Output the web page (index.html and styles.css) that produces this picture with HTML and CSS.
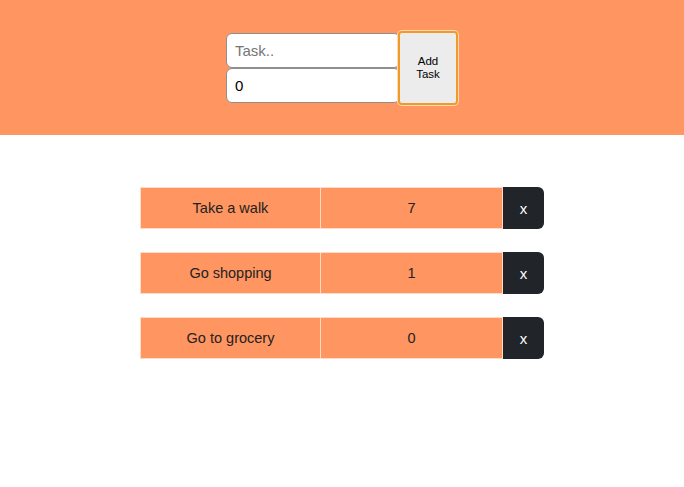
FILE: index.html
```html
<!DOCTYPE html>
<html>
<head>
<meta charset="utf-8">
<link rel="stylesheet" href="styles.css">
</head>
<body>
<header class="top">
  <form class="task-form">
    <div class="fields">
      <input class="field" type="text" placeholder="Task..">
      <input class="field" type="text" value="0">
    </div>
    <button class="add" type="button">Add<br>Task</button>
  </form>
</header>
<main class="list">
  <div class="row"><div class="cell">Take a walk</div><div class="cell">7</div><button class="del">x</button></div>
  <div class="row"><div class="cell">Go shopping</div><div class="cell">1</div><button class="del">x</button></div>
  <div class="row"><div class="cell">Go to grocery</div><div class="cell">0</div><button class="del">x</button></div>
</main>
</body>
</html>
```
FILE: styles.css
```css
html, body { margin: 0; padding: 0; }
body { font-family: "Liberation Sans", Arial, sans-serif; background: #fff; color: #212529; }
.top { background: #ff9560; height: 135px; display: flex; justify-content: center; align-items: flex-start; padding-top: 31px; box-sizing: border-box; }
.task-form { display: flex; align-items: flex-start; }
.fields { display: flex; flex-direction: column; padding-top: 2px; }
.field { width: 174px; height: 35px; box-sizing: border-box; border: 1px solid #8f8f8f; border-radius: 6px; padding: 0 8px; font-family: "Liberation Sans", Arial, sans-serif; font-size: 15px; color: #000; background: #fff; margin: 0; outline: none; }
.field::placeholder { color: #757575; }
.add { width: 60px; height: 74px; margin-left: -2px; box-sizing: border-box; border: 2px solid #f29a26; border-radius: 4px; box-shadow: 0 0 0 1px #ffd9b8; background: #ececec; font-family: "Liberation Sans", Arial, sans-serif; font-size: 11.5px; color: #000; line-height: 13px; padding: 0; }
.list { display: flex; flex-direction: column; align-items: center; gap: 23px; padding-top: 52px; }
.row { display: flex; width: 404px; height: 42px; }
.cell { flex: 0 0 181px; box-sizing: border-box; background: #ff9560; border: 1px solid #ffdcc6; display: flex; align-items: center; justify-content: center; font-size: 14.5px; color: #222; }
.cell + .cell { border-left: none; flex-basis: 182px; }
.del { flex: 0 0 41px; background: #212529; color: #fff; border: none; border-radius: 0 6px 6px 0; font-family: "Liberation Sans", Arial, sans-serif; font-size: 15px; padding: 0; }
```
